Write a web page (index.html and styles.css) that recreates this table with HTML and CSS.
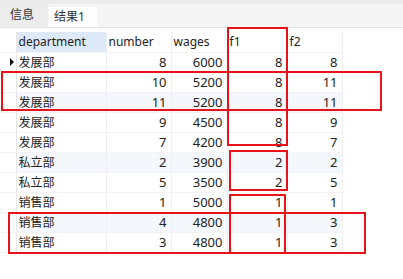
FILE: index.html
```html
<!DOCTYPE html>
<html lang="zh">
<head>
    <meta charset="UTF-8">
    <title>结果1</title>
    <link rel="stylesheet" href="styles.css">
</head>
<body>
    <div class="view">
        <div class="top-strip"></div>
        <div class="tab-bar">
            <div class="tab">信息</div>
            <div class="tab active">结果1</div>
        </div>
        <table class="grid">
            <colgroup>
                <col class="c-gutter">
                <col class="c-dept">
                <col class="c-number">
                <col class="c-wages">
                <col class="c-f1">
                <col class="c-f2">
            </colgroup>
            <thead>
                <tr>
                    <th class="gutter"></th>
                    <th class="selected">department</th>
                    <th>number</th>
                    <th>wages</th>
                    <th>f1</th>
                    <th>f2</th>
                </tr>
            </thead>
            <tbody>
                <tr><td class="gutter"><span class="cursor"></span></td><td>发展部</td><td class="num">8</td><td class="num">6000</td><td class="num">8</td><td class="num">8</td></tr>
                <tr><td class="gutter"></td><td>发展部</td><td class="num">10</td><td class="num">5200</td><td class="num">8</td><td class="num">11</td></tr>
                <tr class="tint"><td class="gutter"></td><td>发展部</td><td class="num">11</td><td class="num">5200</td><td class="num">8</td><td class="num">11</td></tr>
                <tr><td class="gutter"></td><td>发展部</td><td class="num">9</td><td class="num">4500</td><td class="num">8</td><td class="num">9</td></tr>
                <tr><td class="gutter"></td><td>发展部</td><td class="num">7</td><td class="num">4200</td><td class="num">8</td><td class="num">7</td></tr>
                <tr class="tint"><td class="gutter"></td><td>私立部</td><td class="num">2</td><td class="num">3900</td><td class="num">2</td><td class="num">2</td></tr>
                <tr><td class="gutter"></td><td>私立部</td><td class="num">5</td><td class="num">3500</td><td class="num">2</td><td class="num">5</td></tr>
                <tr><td class="gutter"></td><td>销售部</td><td class="num">1</td><td class="num">5000</td><td class="num">1</td><td class="num">1</td></tr>
                <tr class="tint"><td class="gutter"></td><td>销售部</td><td class="num">4</td><td class="num">4800</td><td class="num">1</td><td class="num">3</td></tr>
                <tr><td class="gutter"></td><td>销售部</td><td class="num">3</td><td class="num">4800</td><td class="num">1</td><td class="num">3</td></tr>
            </tbody>
        </table>

        <!-- hand-drawn annotation boxes -->
        <div class="mark mark-f1-top"></div>
        <div class="mark mark-rows-dev"></div>
        <div class="mark mark-f1-mid"></div>
        <div class="mark mark-f1-low"></div>
        <div class="mark mark-rows-sales"></div>
    </div>
</body>
</html>
```

FILE: styles.css
```css
* {
    margin: 0;
    padding: 0;
    box-sizing: border-box;
}

body {
    font-family: 'Noto Sans', 'Noto Sans CJK SC', sans-serif;
    font-size: 12px;
    color: #222;
    background: #fff;
}

.view {
    position: relative;
    width: 403px;
    height: 279px;
    overflow: hidden;
}

.top-strip {
    height: 4px;
    background: #ebebeb;
}

.tab-bar {
    display: flex;
    align-items: flex-end;
    height: 24px;
    background: #f5f5f5;
    border-bottom: 1px solid #e2e2e2;
}

.tab {
    height: 23px;
    line-height: 22px;
    padding: 0 14px 0 10px;
    background: #ececec;
    color: #333;
    font-size: 12px;
}

.tab.active {
    height: 20px;
    line-height: 19px;
    margin-left: 1px;
    padding: 0 12px 0 5px;
    background: #fff;
}

.grid {
    margin-top: 4px;
    border-collapse: collapse;
    table-layout: fixed;
    width: 342px;
}

.c-gutter { width: 16px; }
.c-dept { width: 90px; }
.c-number { width: 65px; }
.c-wages { width: 56px; }
.c-f1 { width: 60px; }
.c-f2 { width: 55px; }

.grid th,
.grid td {
    height: 20px;
    padding: 0 3px;
    border-right: 1px solid #efefef;
    border-bottom: 1px solid #f3f3f3;
    white-space: nowrap;
    overflow: hidden;
}

.grid th {
    font-weight: normal;
    text-align: left;
    padding-left: 2px;
    color: #222;
}

.grid th.selected {
    background: #dde9f6;
}

.grid td {
    padding-left: 2px;
}

.grid td.num {
    text-align: right;
    font-size: 13px;
    padding-right: 4px;
}

.grid .gutter {
    border-right: 1px solid #e6e6e6;
    position: relative;
    padding: 0;
}

.grid tr.tint td {
    background: #f4f7fb;
}

.grid tr.tint td.gutter {
    background: #fff;
}

.cursor {
    display: block;
    width: 0;
    height: 0;
    margin-left: 10px;
    border-top: 4px solid transparent;
    border-bottom: 4px solid transparent;
    border-left: 4px solid #111;
}

.mark {
    position: absolute;
    border: 2px solid #e8121a;
}

.mark-f1-top {
    left: 227px;
    top: 27px;
    width: 61px;
    height: 119px;
}

.mark-rows-dev {
    left: 1px;
    top: 71px;
    width: 381px;
    height: 40px;
}

.mark-f1-mid {
    left: 229px;
    top: 150px;
    width: 59px;
    height: 41px;
}

.mark-f1-low {
    left: 229px;
    top: 194px;
    width: 57px;
    height: 60px;
}

.mark-rows-sales {
    left: 8px;
    top: 212px;
    width: 358px;
    height: 42px;
}
```
